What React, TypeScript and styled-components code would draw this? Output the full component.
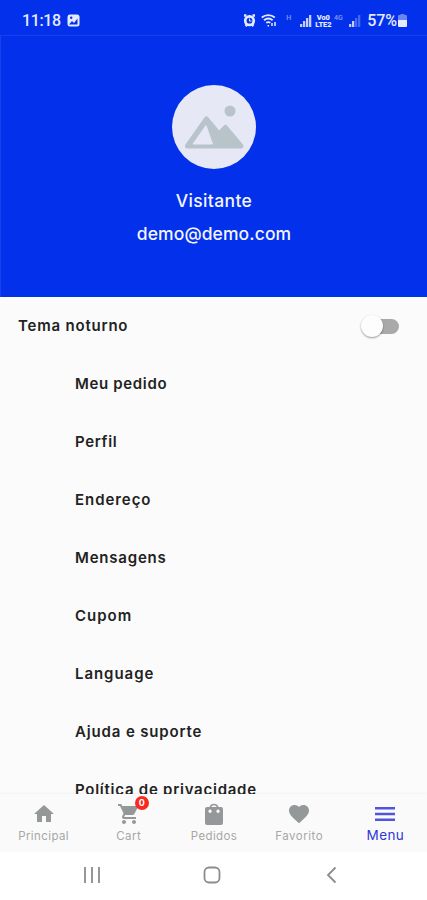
import React from "react";
import styled, { createGlobalStyle } from "styled-components";
import { MdHome, MdShoppingCart, MdFavorite } from "react-icons/md";

const BLUE = "#0230eb";

const GlobalStyle = createGlobalStyle`
  * { box-sizing: border-box; }
  body { margin: 0; background: #fff; font-family: Inter, Roboto, "Liberation Sans", sans-serif; }
`;

const Screen = styled.div`
  width: 427px;
  height: 900px;
  display: flex;
  flex-direction: column;
  overflow: hidden;
  background: #fbfbfb;
`;

const StatusBar = styled.div`
  flex: none;
  height: 35px;
  padding: 6px 20px 0 22px;
  display: flex;
  align-items: center;
  justify-content: space-between;
  background: ${BLUE};
  color: #e6eaff;
  font-family: Roboto, sans-serif;
  font-size: 16px;
  font-weight: 500;
`;

const StatusGroup = styled.div`
  display: flex;
  align-items: center;
  height: 20px;
`;

const StatusText = styled.span<{ $spacing?: number; $gap?: number }>`
  letter-spacing: ${(p) => p.$spacing ?? 0}px;
  margin-right: ${(p) => p.$gap ?? 0}px;
`;

const StatusIcon = styled.svg<{ $gap?: number }>`
  display: block;
  flex: none;
  margin-right: ${(p) => p.$gap ?? 0}px;
`;

const NetworkTag = styled.span<{ $width: number }>`
  width: ${(p) => p.$width}px;
  height: 14px;
  font-size: 7px;
  line-height: 8px;
  opacity: 0.55;
`;

const Volte = styled.span`
  width: 18px;
  display: flex;
  flex-direction: column;
  align-items: center;
  font-size: 7.5px;
  line-height: 7px;
  font-weight: 900;
  letter-spacing: -0.1px;
`;

const Profile = styled.header`
  flex: none;
  height: 262px;
  padding-top: 49px;
  display: flex;
  flex-direction: column;
  align-items: center;
  background: ${BLUE};
  border-top: 1px solid #1740ee;
  border-left: 1px solid #1740ee;
  color: #f3f5ff;
`;

const Avatar = styled.svg`
  display: block;
  width: 84px;
  height: 84px;
`;

const ProfileLine = styled.div<{ $top: number; $spacing: number }>`
  margin-top: ${(p) => p.$top}px;
  height: 22px;
  line-height: 22px;
  font-size: 17.5px;
  font-weight: 500;
  letter-spacing: ${(p) => p.$spacing}px;
`;

const Settings = styled.main`
  flex: 1;
  min-height: 0;
  overflow: hidden;
`;

const Row = styled.div<{ $inset?: boolean }>`
  height: 58px;
  padding: 0 28px 0 ${(p) => (p.$inset ? 75 : 18)}px;
  display: flex;
  align-items: center;
  justify-content: space-between;
`;

const Label = styled.span<{ $spacing: number }>`
  color: #222;
  font-size: 15px;
  font-weight: 600;
  line-height: 20px;
  white-space: nowrap;
  letter-spacing: ${(p) => p.$spacing}px;
`;

const Toggle = styled.div`
  width: 38px;
  height: 22px;
  display: flex;
  align-items: center;
`;

const Knob = styled.span`
  position: relative;
  z-index: 1;
  flex: none;
  width: 22px;
  height: 22px;
  border-radius: 50%;
  background: #fdfdfd;
  box-shadow: 0 1px 2px rgba(0, 0, 0, 0.4);
`;

const Track = styled.span`
  flex: none;
  width: 28px;
  height: 15px;
  margin-left: -12px;
  border-radius: 8px;
  background: #a9a9a9;
`;

const TabBar = styled.nav`
  flex: none;
  height: 58px;
  padding-left: 1px;
  display: grid;
  grid-template-columns: repeat(5, 1fr);
  background: #fafafa;
  box-shadow: 0 -1px 2px rgba(0, 0, 0, 0.04);
`;

const Tab = styled.div<{ $active?: boolean }>`
  display: flex;
  flex-direction: column;
  align-items: center;
  padding: 8px 0 0 ${(p) => (p.$active ? 2 : 0)}px;
  color: ${(p) => (p.$active ? "#5055df" : "#959899")};
`;

const TabIcon = styled.div`
  position: relative;
  height: 24px;
  font-size: 24px;
  line-height: 0;
`;

const TabLabel = styled.span<{ $active?: boolean; $spacing: number }>`
  margin-top: ${(p) => (p.$active ? 1 : 2)}px;
  font-size: ${(p) => (p.$active ? 13.5 : 11.5)}px;
  line-height: 17px;
  letter-spacing: ${(p) => p.$spacing}px;
  color: ${(p) => (p.$active ? "#2e38d8" : "#a7a7a7")};
`;

const Badge = styled.span`
  position: absolute;
  left: 18px;
  top: -6px;
  width: 14px;
  height: 14px;
  border-radius: 50%;
  background: #f62a20;
  color: #fff;
  font-size: 9px;
  font-weight: 700;
  line-height: 14px;
  text-align: center;
`;

const SystemNav = styled.div`
  flex: none;
  height: 48px;
  padding: 0 86px 2px 83px;
  display: flex;
  align-items: center;
  justify-content: space-between;
  background: #fff;
  color: #8c8c8c;
`;

const SystemIcon = styled.svg`
  display: block;
  width: 18px;
  height: 18px;
  fill: none;
  stroke: currentColor;
  stroke-width: 1.8;
`;

const items = [
  { text: "Meu pedido", spacing: 0.65 },
  { text: "Perfil", spacing: 0.65 },
  { text: "Endereço", spacing: 0.95 },
  { text: "Mensagens", spacing: 0.8 },
  { text: "Cupom", spacing: 1 },
  { text: "Language", spacing: 0.95 },
  { text: "Ajuda e suporte", spacing: 0.85 },
  { text: "Política de privacidade", spacing: 0.75 },
];

const BagIcon = () => (
  <svg width="24" height="24" viewBox="0 0 24 24" fill="currentColor">
    <path
      fillRule="evenodd"
      d="M5 5H7.500a4.800 4.800 0 0 1 9 0H19A2 2 0 0 1 21 7V21a2 2 0 0 1-2 2H5a2 2 0 0 1-2-2V7a2 2 0 0 1 2-2ZM9.200 5h5.600a3.100 3.100 0 0 0-5.600 0ZM8 7.500a1.700 1.700 0 1 0 .1 0ZM16 7.500a1.700 1.700 0 1 0 .1 0Z"
    />
  </svg>
);

const MenuIcon = () => (
  <svg width="24" height="24" viewBox="0 0 24 24" fill="currentColor">
    <path d="M2 5h20v2.500h-20zM2 10.700h20v2.500h-20zM2 16.400h20v2.500h-20z" />
  </svg>
);

const tabs = [
  { text: "Principal", Icon: MdHome, spacing: 0.4 },
  { text: "Cart", Icon: MdShoppingCart, spacing: 0.5, badge: "0" },
  { text: "Pedidos", Icon: BagIcon, spacing: 0.35 },
  { text: "Favorito", Icon: MdFavorite, spacing: 0.5 },
  { text: "Menu", Icon: MenuIcon, spacing: 0.4, active: true },
];

function Signal({ level, gap }: { level: number; gap: number }) {
  return (
    <StatusIcon width="12" height="12" viewBox="0 0 12 12" $gap={gap} fill="currentColor">
      {[3, 6, 9, 12].map((h, i) => (
        <rect key={h} x={i * 3} y={12 - h} width="2.3" height={h} opacity={i < level ? 0.85 : 0.3} />
      ))}
    </StatusIcon>
  );
}

export default function App() {
  return (
    <Screen>
      <GlobalStyle />
      <StatusBar>
        <StatusGroup>
          <StatusText $gap={6} $spacing={-0.4}>11:18</StatusText>
          <StatusIcon width="13" height="13" viewBox="0 0 13 13">
            <rect x="0.5" y="0.5" width="12" height="12" rx="2.5" fill="#e6eaff" />
            <path d="M2 10.5 5 7l2 2 3.5-4.5V10.5z" fill={BLUE} />
            <circle cx="4.2" cy="3.8" r="1.2" fill={BLUE} />
          </StatusIcon>
        </StatusGroup>
        <StatusGroup>
          <StatusIcon width="13" height="13" viewBox="0 0 13 13" $gap={5}>
            <path d="M1 1.5h2.500M9.500 1.500H12M2.500 12l1-1M10.500 12l-1-1" stroke="#e6eaff" strokeWidth="2.500" />
            <circle cx="6.500" cy="6.700" r="5.600" fill="#e6eaff" />
            <circle cx="6.500" cy="6.700" r="2.900" fill={BLUE} />
            <path d="M6.500 4.500v2.500H8.500" stroke="#e6eaff" fill="none" />
          </StatusIcon>
          <StatusIcon width="16" height="13" viewBox="0 0 16 13" $gap={9} fill="none" stroke="#e6eaff" strokeWidth="1.900">
            <path d="M.8 3.500a10 10 0 0 1 13 0M3 6.200a7 7 0 0 1 8.600 0M5.200 8.800a4 4 0 0 1 4.200 0" />
            <path d="M7.300 11v1.500M11 9v3M14 8v4" strokeWidth="1.500" />
          </StatusIcon>
          <NetworkTag $width={14}>H</NetworkTag>
          <Signal level={4} gap={2} />
          <Volte><span>Vo0</span><span>LTE2</span></Volte>
          <NetworkTag $width={17}>&nbsp;4G</NetworkTag>
          <Signal level={2} gap={6} />
          <StatusText $gap={1} $spacing={-0.1}>57%</StatusText>
          <StatusIcon width="9" height="13" viewBox="0 0 9 13" fill="#e6eaff">
            <path d="M2.500 0h4v1H8a1 1 0 0 1 1 1v4H0V2a1 1 0 0 1 1-1h1.500z" opacity=".45" />
            <path d="M0 6h9v6a1 1 0 0 1-1 1H1a1 1 0 0 1-1-1z" />
          </StatusIcon>
        </StatusGroup>
      </StatusBar>

      <Profile>
        <Avatar viewBox="0 0 84 84">
          <circle cx="42" cy="42" r="42" fill="#e7e8f5" />
          <circle cx="58" cy="26" r="5.500" fill="#b9c3ca" />
          <path
            d="M34.500 34 47 49 53.500 42.500 69 61H15.500Z"
            fill="#b9c3ca"
            stroke="#b9c3ca"
            strokeWidth="5"
            strokeLinejoin="round"
          />
          <path d="M34 40.500 40.500 59H21Z" fill="#e7e8f5" stroke="#e7e8f5" strokeLinejoin="round" />
        </Avatar>
        <ProfileLine $top={21} $spacing={0.35}>Visitante</ProfileLine>
        <ProfileLine $top={11} $spacing={0.1}>demo@demo.com</ProfileLine>
      </Profile>

      <Settings>
        <Row>
          <Label $spacing={0.8}>Tema noturno</Label>
          <Toggle role="switch" aria-checked="false">
            <Knob />
            <Track />
          </Toggle>
        </Row>
        {items.map((item) => (
          <Row key={item.text} $inset>
            <Label $spacing={item.spacing}>{item.text}</Label>
          </Row>
        ))}
      </Settings>

      <TabBar>
        {tabs.map(({ text, Icon, spacing, badge, active }) => (
          <Tab key={text} $active={active}>
            <TabIcon>
              <Icon />
              {badge && <Badge>{badge}</Badge>}
            </TabIcon>
            <TabLabel $active={active} $spacing={spacing}>{text}</TabLabel>
          </Tab>
        ))}
      </TabBar>

      <SystemNav>
        <SystemIcon viewBox="0 0 18 18"><path d="M2 1v16M9 1v16M16 1v16" /></SystemIcon>
        <SystemIcon viewBox="0 0 18 18"><rect x="1.500" y="1.500" width="15" height="15" rx="4.500" /></SystemIcon>
        <SystemIcon viewBox="0 0 18 18"><path d="M12.500 1.500 5 9l7.500 7.500" /></SystemIcon>
      </SystemNav>
    </Screen>
  );
}
